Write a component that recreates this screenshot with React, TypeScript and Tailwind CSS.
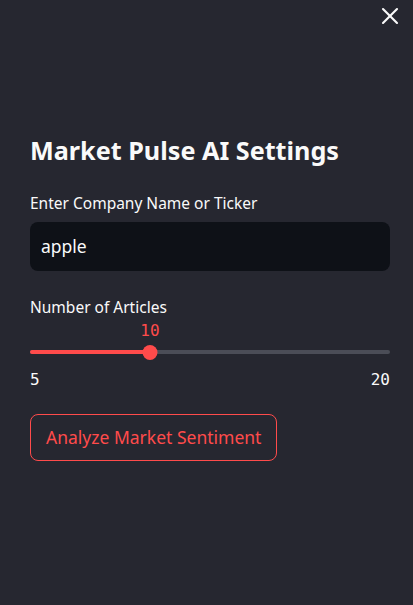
import { X } from 'lucide-react'

const MIN = 5
const MAX = 20
const VALUE = 10

export default function App() {
  const pct = ((VALUE - MIN) / (MAX - MIN)) * 100

  return (
    <div className="relative w-[413px] h-[605px] bg-[#262730] text-[#fafafa] font-['Noto_Sans',sans-serif]">
      {/* Close button */}
      <button className="absolute right-[9px] top-[2px] text-[#fafafa]">
        <X size={28} strokeWidth={1.8} />
      </button>

      <div className="flex flex-col pl-[30px] pr-[23px] pt-[132px]">
        <h2 className="text-[25.2px] font-bold leading-[36px]">Market Pulse AI Settings</h2>

        {/* Text input */}
        <label className="mt-[25px] text-[15.5px] leading-[20px]">Enter Company Name or Ticker</label>
        <div className="mt-[9px] h-[49px] rounded-[8px] bg-[#0e1117] flex items-center px-[11px] text-[17.5px]">
          apple
        </div>

        {/* Slider */}
        <label className="mt-[26px] text-[15.5px] leading-[20px]">Number of Articles</label>
        <div className="mt-[4px] h-[20px] relative">
          <span
            className="absolute -translate-x-1/2 text-[16px] text-[#ff4b4b] font-['DejaVu_Sans_Mono',monospace] leading-[20px]"
            style={{ left: `${pct}%` }}
          >
            {VALUE}
          </span>
        </div>
        <div className="relative h-[22px] flex items-center">
          <div className="flex-1 h-[4px] rounded-full bg-[#4b4d57] overflow-hidden">
            <div className="h-full bg-[#ff4b4b]" style={{ width: `${pct}%` }} />
          </div>
          <div
            className="absolute w-[15px] h-[15px] -translate-x-1/2 rounded-full bg-[#ff4b4b]"
            style={{ left: `${pct}%` }}
          />
        </div>
        <div className="mt-[7px] flex justify-between text-[16px] font-['DejaVu_Sans_Mono',monospace] leading-[20px]">
          <span>{MIN}</span>
          <span>{MAX}</span>
        </div>

        {/* Button */}
        <div className="mt-[24px] flex">
          <button className="h-[47px] px-[15px] rounded-[8px] border border-[#ff4b4b] text-[#ff4b4b] text-[17.5px]">
            Analyze Market Sentiment
          </button>
        </div>
      </div>
    </div>
  )
}
